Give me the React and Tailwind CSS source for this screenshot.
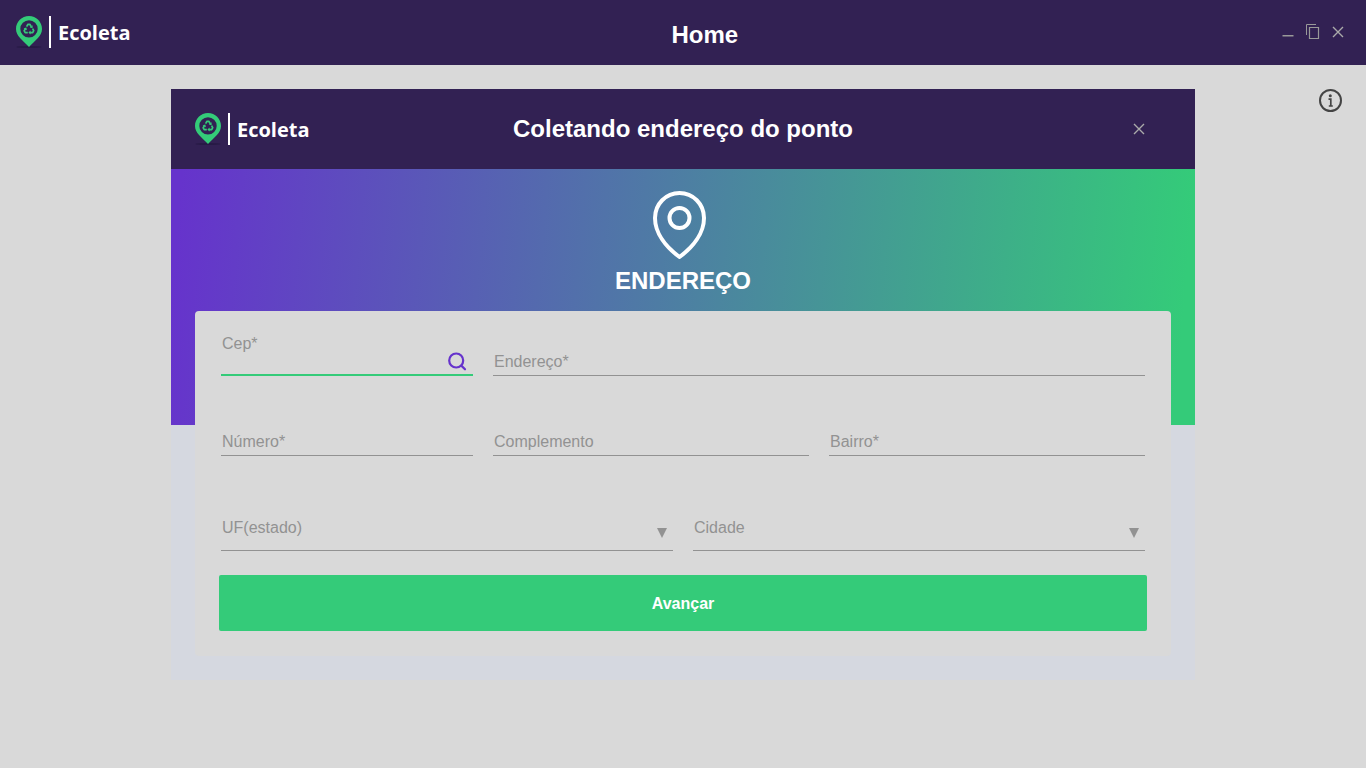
import { useState } from "react";

function PinMark() {
  return (
    <svg className="h-8 w-[26px] shrink-0" viewBox="0 0 26 32" fill="none" aria-hidden="true">
      <ellipse cx="13" cy="31" rx="12.5" ry="1" fill="#271a45" />
      <path fillRule="evenodd" fill="#34cb79" d="M13 0C5.800 0 0 5.800 0 13C0 20 6.500 24 13 31C19.500 24 26 20 26 13C26 5.800 20.200 0 13 0ZM13 4.200A8.700 8.700 0 1 1 13 21.600A8.700 8.700 0 0 1 13 4.200Z" />
      <g stroke="#34cb79" strokeWidth="1.700" strokeLinejoin="round">
        <path d="M10.600 10.600L12 8.300H13.800L15.300 10.700" />
        <path d="M16.600 12.600L17.700 14.700L16.700 16.600H13.600" />
        <path d="M11.800 16.600H9.200L8.200 14.800L9.600 12.400" />
      </g>
      <path fill="#34cb79" d="M16.600 9.300V12.200L13.800 11.400ZM14.600 14.600V18.600L12.400 16.600ZM7.600 12.300L10.300 11.400L11 14.200Z" />
    </svg>
  );
}

function Logo() {
  return (
    <div className="flex h-8 items-center">
      <PinMark />
      <span className="ml-[7px] h-8 w-0.5 bg-white" />
      <span className="ml-[7px] pt-0.5 font-['Open_Sans',sans-serif] text-xl leading-8 font-bold text-white">Ecoleta</span>
    </div>
  );
}

function CloseIcon() {
  return (
    <svg className="size-3" viewBox="0 0 12 12" fill="none" stroke="#aaa" strokeWidth="1.400" aria-hidden="true">
      <path d="M1 1L11 11M11 1L1 11" />
    </svg>
  );
}

function WindowButton({ label, children }) {
  return (
    <button type="button" aria-label={label} className="flex h-8 w-[25px] items-center justify-center">
      {children}
    </button>
  );
}

function Field({ id, label, active, onFocus, children }) {
  return (
    <div className="relative h-12 min-w-0">
      <input
        id={id}
        name={id}
        onFocus={() => onFocus(id)}
        className={`h-12 w-full bg-transparent px-px pt-5 text-base text-[#444] outline-none ${active ? "border-b-2 border-[#34cb79]" : "border-b border-[#929292]"}`}
      />
      <label
        htmlFor={id}
        className={`pointer-events-none absolute left-px text-base leading-6 text-[#929292] ${active ? "top-1" : "top-[22px]"}`}
      >
        {label}
      </label>
      {children}
    </div>
  );
}

function SelectField({ id, label }) {
  const [value, setValue] = useState("");
  return (
    <div className="relative h-12 min-w-0">
      <select
        id={id}
        name={id}
        value={value}
        onChange={(e) => setValue(e.target.value)}
        className="h-12 w-full appearance-none border-b border-[#929292] bg-transparent pr-8 pl-px text-base text-[#444] outline-none"
      >
        <option value="" />
      </select>
      <label htmlFor={id} className="pointer-events-none absolute top-[13px] left-px text-base leading-6 text-[#929292]">
        {label}
      </label>
      <svg className="pointer-events-none absolute top-[25px] right-1.5 size-2.5" viewBox="0 0 10 10" aria-hidden="true">
        <path d="M0 0H10L5 10Z" fill="#929292" />
      </svg>
    </div>
  );
}

export default function App() {
  const [active, setActive] = useState("cep");
  const field = (id, label, children) => (
    <Field id={id} label={label} active={active === id} onFocus={setActive}>
      {children}
    </Field>
  );

  return (
    <div className="min-h-screen bg-[#d9d9d9] font-['Liberation_Sans',Arial,sans-serif]">
      <header className="flex h-[65px] items-start justify-between bg-[#322153] px-4 pt-4">
        <Logo />
        <h1 className="pt-[3px] pl-1 text-2xl leading-8 font-bold text-white">Home</h1>
        <div className="flex items-center">
          <WindowButton label="Minimizar">
            <svg className="size-3" viewBox="0 0 12 12" aria-hidden="true">
              <path d="M0.500 9H11.500V10.500H0.500Z" fill="#999" />
            </svg>
          </WindowButton>
          <WindowButton label="Restaurar">
            <svg className="h-4 w-[14px]" viewBox="0 0 14 16" fill="none" stroke="#999" aria-hidden="true">
              <path d="M0.500 11V0.500H10" />
              <path d="M3.500 3.500H12.500V14.500H3.500Z" strokeWidth="1.200" />
            </svg>
          </WindowButton>
          <WindowButton label="Fechar">
            <CloseIcon />
          </WindowButton>
        </div>
      </header>

      <main className="grid grid-cols-[1fr_minmax(0,1024px)_1fr] items-start p-6">
        <section className="col-start-2 bg-[#d5d8e0] pb-6">
          <div className="grid h-20 grid-cols-[1fr_auto_1fr] items-center bg-[#322153] px-6">
            <Logo />
            <h2 className="text-2xl leading-8 font-bold text-white">Coletando endereço do ponto</h2>
            <button type="button" aria-label="Fechar endereço" className="flex h-8 w-16 items-center justify-center justify-self-end">
              <CloseIcon />
            </button>
          </div>

          <div className="flex h-64 flex-col items-center bg-[linear-gradient(95deg,#6633cc_1%,#34cb79_98%)] pt-[22px] text-white">
            <svg className="mr-[7px] h-[68px] w-[54px]" viewBox="0 0 54 68" fill="none" stroke="currentColor" strokeWidth="4" strokeLinejoin="round" aria-hidden="true">
              <path d="M26.500 2C13 2 2 13 2 27C2 42 13 56 26.500 66C40 56 51 42 51 27C51 13 40 2 26.500 2Z" />
              <circle cx="26.500" cy="27" r="10" />
            </svg>
            <h3 className="mt-1.5 text-2xl leading-8 font-bold">ENDEREÇO</h3>
          </div>

          <form className="mx-6 -mt-[114px] rounded bg-[#d9d9d9] px-6 pt-[17px] pb-[25px]" onSubmit={(e) => e.preventDefault()}>
            <div className="flex flex-col gap-8 px-0.5">
              <div className="grid grid-cols-[252fr_652fr] gap-5">
                {field(
                  "cep",
                  "Cep*",
                  <button type="button" aria-label="Buscar CEP" className="absolute right-1.5 bottom-1 text-[#6633cc]">
                    <svg className="block size-5" viewBox="0 0 20 20" fill="none" stroke="currentColor" strokeWidth="2.200" strokeLinecap="round" aria-hidden="true">
                      <circle cx="9.200" cy="8.500" r="7" />
                      <path d="M14.300 13.600L18 17.300" />
                    </svg>
                  </button>
                )}
                {field("endereco", "Endereço*")}
              </div>
              <div className="grid grid-cols-[252fr_316fr_316fr] gap-5">
                {field("numero", "Número*")}
                {field("complemento", "Complemento")}
                {field("bairro", "Bairro*")}
              </div>
              <div className="grid grid-cols-2 gap-5 pt-[15px]">
                <SelectField id="uf" label="UF(estado)" />
                <SelectField id="cidade" label="Cidade" />
              </div>
            </div>
            <button type="submit" className="mt-6 block h-14 w-full rounded-xs bg-[#34cb79] pt-px text-base font-bold text-white">
              Avançar
            </button>
          </form>
        </section>

        <button type="button" aria-label="Informações" className="justify-self-end">
          <svg className="block size-6" viewBox="0 0 24 24" fill="none" aria-hidden="true">
            <circle cx="12.500" cy="11.500" r="10.500" stroke="#444" strokeWidth="2" />
            <circle cx="12.300" cy="6.800" r="1.500" fill="#444" />
            <path d="M10.500 10.200H12.800V17M10.800 17H14.800" stroke="#444" strokeWidth="1.700" />
          </svg>
        </button>
      </main>
    </div>
  );
}
